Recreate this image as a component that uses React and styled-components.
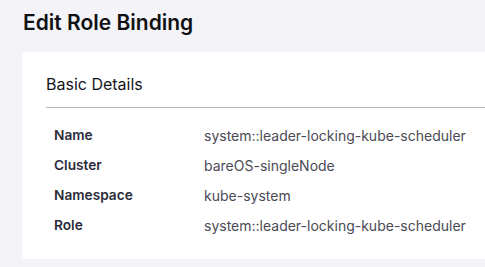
import React from 'react';
import styled, { createGlobalStyle } from 'styled-components';

const GlobalStyle = createGlobalStyle`
    body {
        margin: 0;
        background-color: #f4f4f8;
        font-family: Inter, "Noto Sans", sans-serif;
    }
`
const Page = styled.div`
    padding: 10px 0 0 22px;
    min-height: 267px;
    box-sizing: border-box;
`
const Title = styled.h1`
    margin: 0 0 0 1px;
    font-size: 21px;
    font-weight: 600;
    color: #111114;
    line-height: 25px;
`
const Card = styled.section`
    margin-top: 17px;
    background-color: #ffffff;
    border-radius: 4px 0 0 4px;
    padding: 22px 0 19px 24px;
`
const CardTitle = styled.h2`
    margin: 0;
    font-size: 16px;
    font-weight: 400;
    color: #16161d;
    line-height: 20px;
    padding-bottom: 13px;
    border-bottom: solid 1px #b6b6ba;
`
const Details = styled.dl`
    margin: 12px 0 0 8px;
    display: grid;
    grid-template-columns: 150px 1fr;
    grid-auto-rows: 30px;
    align-items: center;
`
const Label = styled.dt`
    font-size: 13.7px;
    font-weight: 600;
    color: #2b2b3a;
`
const Value = styled.dd`
    margin: 0;
    font-size: 14px;
    color: #4a4a55;
`

const rows = [
    ['Name', 'system::leader-locking-kube-scheduler'],
    ['Cluster', 'bareOS-singleNode'],
    ['Namespace', 'kube-system'],
    ['Role', 'system::leader-locking-kube-scheduler'],
]

export default function App() {
    return (
        <>
            <GlobalStyle />
            <Page>
                <Title>Edit Role Binding</Title>
                <Card>
                    <CardTitle>Basic Details</CardTitle>
                    <Details>
                        {rows.map(([label, value]) => (
                            <React.Fragment key={label}>
                                <Label>{label}</Label>
                                <Value>{value}</Value>
                            </React.Fragment>
                        ))}
                    </Details>
                </Card>
            </Page>
        </>
    )
}
